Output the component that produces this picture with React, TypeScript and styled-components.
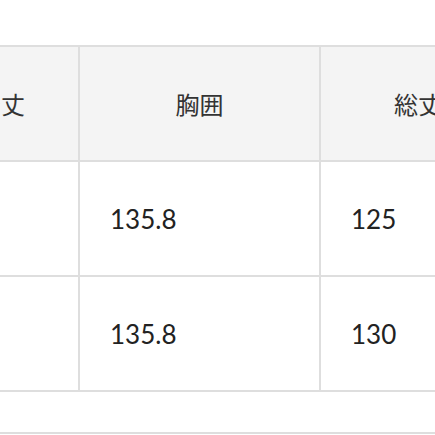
import React from 'react';
import styled, { createGlobalStyle } from 'styled-components';

const GlobalStyle = createGlobalStyle`
  html, body {
    margin: 0;
    padding: 0;
    background: #fff;
  }
  body {
    font-family: Lato, "Noto Sans CJK JP", sans-serif;
    color: #333;
    overflow: hidden;
  }
`;

const Page = styled.div`
  width: 435px;
  height: 435px;
  overflow: hidden;
  padding-top: 45px;
  box-sizing: border-box;
`;

const SizeTable = styled.table`
  border-collapse: collapse;
  table-layout: fixed;
  width: 593px;
  margin-left: -78px;
`;

const Row = styled.tr`
  height: 115px;
`;

const HeadCell = styled.th`
  border: 2px solid #dedede;
  background: #f4f4f4;
  font-family: Lato, "Noto Sans CJK JP", sans-serif;
  font-weight: 400;
  font-size: 24px;
  color: #333;
  text-align: center;
  vertical-align: middle;
  padding: 0;
`;

const Cell = styled.td`
  border: 2px solid #dedede;
  font-size: 26px;
  color: #222;
  text-align: left;
  vertical-align: middle;
  padding: 0 0 0 30px;
`;

const Divider = styled.div`
  margin-top: 40px;
  height: 2px;
  background: #dedede;
`;

const columns = [
  { label: '着丈', width: 156 },
  { label: '胸囲', width: 241 },
  { label: '総丈', width: 196 },
];

const rows = [
  ['', '135.8', '125'],
  ['', '135.8', '130'],
];

const App: React.FC = () => (
  <>
    <GlobalStyle />
    <Page>
      <SizeTable>
        <colgroup>
          {columns.map((col) => (
            <col key={col.label} style={{ width: col.width }} />
          ))}
        </colgroup>
        <thead>
          <Row>
            {columns.map((col) => (
              <HeadCell key={col.label}>{col.label}</HeadCell>
            ))}
          </Row>
        </thead>
        <tbody>
          {rows.map((row, i) => (
            <Row key={i}>
              {row.map((value, j) => (
                <Cell key={j}>{value}</Cell>
              ))}
            </Row>
          ))}
        </tbody>
      </SizeTable>
      <Divider />
    </Page>
  </>
);

export default App;
